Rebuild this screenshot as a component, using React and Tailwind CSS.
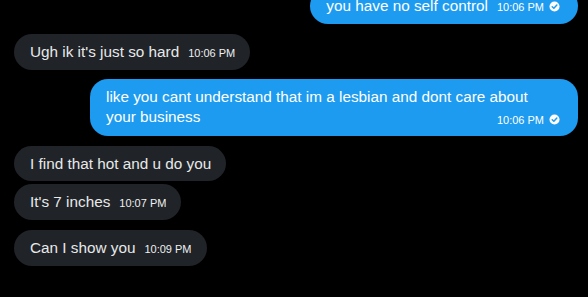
function Check() {
  return (
    <svg width="11" height="11" viewBox="0 0 12 12" className="inline-block ml-[5px] align-[-1px]">
      <circle cx="6" cy="6" r="5.5" fill="white" />
      <path d="M3.5 6.2 L5.3 8 L8.6 4.3" fill="none" stroke="#1d9bf0" strokeWidth="1.6" strokeLinecap="round" strokeLinejoin="round" />
    </svg>
  )
}

function Time({ t, sent }) {
  return (
    <span className={`text-[11px] whitespace-nowrap ${sent ? 'text-white' : 'text-[#eef0f1]'}`}>
      {t}{sent && <Check />}
    </span>
  )
}

function Msg({ text, time, sent, wrap, className = '' }) {
  if (sent) {
    return (
      <div className={`flex justify-end pr-[10px] ${className}`}>
        <div className={`max-w-[488px] bg-[#1d9bf0] text-white rounded-[18px] pl-4 pr-[18px] text-[15.3px] leading-5 ${wrap ? 'py-2' : 'py-[7.5px]'}`}>
          {wrap ? (
            <>
              <span>{text}</span>
              <span className="float-right mt-[4px] leading-4"><Time t={time} sent /></span>
            </>
          ) : (
            <>
              <span>{text}</span>
              <span className="ml-[9px]"><Time t={time} sent /></span>
            </>
          )}
        </div>
      </div>
    )
  }
  return (
    <div className={`flex pl-[14px] ${className}`}>
      <div className="bg-[#202327] text-[#e7e9ea] rounded-[18px] pl-4 pr-[15px] py-[7.5px] text-[15.3px] leading-5">
        <span>{text}</span>
        {time && <span className="ml-[9px]"><Time t={time} /></span>}
      </div>
    </div>
  )
}

export default function App() {
  return (
    <div className="w-[588px] h-[297px] bg-black overflow-hidden font-['Liberation_Sans',Arial,sans-serif]">
      <div className="-mt-[12px]">
        <Msg sent text="you have no self control" time="10:06 PM" />
        <Msg className="mt-[10px]" text="Ugh ik it's just so hard" time="10:06 PM" />
        <Msg className="mt-[9px]" sent wrap text={'like you cant understand that im a lesbian and dont care about your\u00a0business'} time="10:06 PM" />
        <Msg className="mt-[10px]" text="I find that hot and u do you" />
        <Msg className="mt-[3px]" text="It's 7 inches" time="10:07 PM" />
        <Msg className="mt-[10px]" text="Can I show you" time="10:09 PM" />
      </div>
    </div>
  )
}
